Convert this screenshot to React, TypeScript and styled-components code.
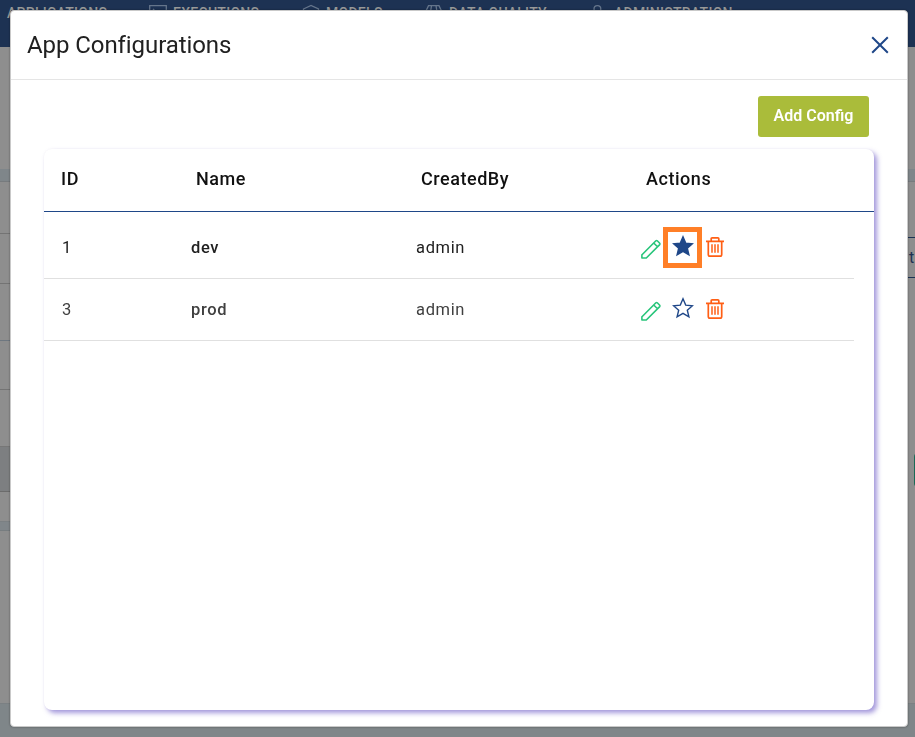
import React from 'react';
import styled, { createGlobalStyle } from 'styled-components';

const GlobalStyle = createGlobalStyle`
  *, *::before, *::after { box-sizing: border-box; }
  body { margin: 0; overflow: hidden; font-family: Roboto, sans-serif; color: #212121; }
`;

const Page = styled.div`
  display: flex;
  flex-direction: column;
  height: 737px;
  background: #8e8e8e;
`;

const NavBar = styled.nav`
  display: flex;
  flex: none;
  height: 47px;
  background: #1d3253;
  color: #989998;
`;

const NavItem = styled.div<{ $width: number; $gap?: number; $indent?: number }>`
  display: flex;
  flex: none;
  align-items: flex-start;
  width: ${(p) => p.$width}px;
  padding: 4px 0 0 ${(p) => p.$indent ?? 0}px;
  gap: ${(p) => p.$gap ?? 6}px;
  font-size: 14px;
  line-height: 18px;
  font-weight: 500;
  letter-spacing: 0.28px;
  white-space: nowrap;
  svg { flex: none; }
`;

const Backdrop = styled.main`
  display: flex;
  flex: none;
  height: 656px;
  justify-content: space-between;
`;

const Footer = styled.footer`
  flex: 1;
  border-top: 1px solid #7b8083;
  background: #7f8689;
`;

const Rail = styled.div`
  width: 100px;
  flex: none;
`;

const Band = styled.div<{ $height: number; $fill?: string; $line?: string }>`
  height: ${(p) => p.$height}px;
  background: ${(p) => p.$fill ?? '#8e8e8e'};
  border-bottom: ${(p) => (p.$line ? `1px solid ${p.$line}` : '0')};
`;

const SelectStub = styled.div`
  height: 41px;
  border: 1px solid #1d3253;
  border-width: 1px 0;
  padding-left: 94px;
  line-height: 39px;
  font-size: 16px;
  color: #1d3253;
`;

const GreenStub = styled.div`
  width: 20px;
  height: 34px;
  margin-left: 99px;
  border-radius: 4px 0 0 4px;
  background: #1a6a56;
`;

const Dialog = styled.section`
  position: fixed;
  top: 10px;
  left: 10px;
  display: flex;
  flex-direction: column;
  width: 898px;
  height: 717px;
  border: 1px solid #c9c9c9;
  border-radius: 4px;
  background: #fff;
  box-shadow: 0 0 2px rgba(0, 0, 0, 0.45);
`;

const DialogHeader = styled.header`
  display: flex;
  align-items: center;
  justify-content: space-between;
  height: 69px;
  padding: 0 18px 0 16px;
  border-bottom: 1px solid #e5e5e5;
`;

const Title = styled.h1`
  margin: 0;
  font-size: 24px;
  line-height: 32px;
  font-weight: 400;
  letter-spacing: -0.08px;
`;

const IconButton = styled.button`
  display: flex;
  padding: 0;
  border: 0;
  background: none;
`;

const DialogBody = styled.div`
  display: flex;
  flex: 1;
  flex-direction: column;
  padding: 16px 33px 16px;
`;

const AddButton = styled.button`
  align-self: flex-end;
  flex: none;
  width: 111px;
  height: 41px;
  margin-right: 5px;
  padding: 0 0 2px;
  border: 0;
  border-radius: 3px;
  background: #aabc3a;
  color: #fff;
  font: 600 16px Roboto, sans-serif;
`;

const Card = styled.div`
  flex: 1;
  width: 830px;
  margin-top: 12px;
  border-radius: 8px;
  background: #fff;
  box-shadow: 3px 3px 5px rgba(88, 66, 190, 0.55), 0 0 2px rgba(0, 0, 0, 0.04);
`;

const HeadRow = styled.div`
  display: grid;
  grid-template-columns: 135px 225px 225px 1fr;
  align-items: center;
  height: 63px;
  padding: 0 0 4px 17px;
  border-bottom: 1px solid #1f4788;
  color: #111;
  font-size: 18px;
  font-weight: 500;
  letter-spacing: 0.54px;
`;

const Row = styled.div<{ $height: number; $top: number; $color: string }>`
  display: grid;
  grid-template-columns: 129px 225px 225px 1fr;
  align-items: start;
  width: 810px;
  height: ${(p) => p.$height}px;
  padding: ${(p) => p.$top}px 0 0 18px;
  border-bottom: 1px solid #e0e0e0;
  color: ${(p) => p.$color};
  font-size: 16.5px;
  line-height: 22px;
  letter-spacing: 0.65px;
`;

const Name = styled.span`
  font-weight: 500;
`;

const Actions = styled.div`
  display: flex;
  align-items: center;
  height: 41px;
  margin-top: -10px;
`;

const StarFrame = styled.div<{ $marked: boolean }>`
  display: flex;
  align-items: center;
  justify-content: center;
  width: 39px;
  height: 41px;
  margin: 0 4px 0 1px;
  padding-bottom: 3px;
  border: 5px solid ${(p) => (p.$marked ? '#ff7f27' : 'transparent')};
`;

const TrashSlot = styled.span`
  display: flex;
  padding-bottom: 2px;
`;

const CloseIcon = () => (
  <svg width="18" height="18" viewBox="0 0 18 18" fill="none" stroke="#1f4788" strokeWidth="2">
    <path d="M1.2 1.2 16.8 16.8M16.8 1.2 1.2 16.8" />
  </svg>
);

const PencilIcon = () => (
  <svg width="21" height="21" viewBox="0 0 21 21" fill="none" stroke="#29c57b" strokeWidth="1.6" strokeLinejoin="round" transform="translate(-.5 2)">
    <path d="M2 15.2 15.4 1.8Q16.1 1.2 16.8 1.8L19.2 4.2Q19.8 4.9 19.2 5.6L5.8 19H1.4V15.8ZM13.2 4 17 7.8" />
  </svg>
);

const StarIcon = ({ filled }: { filled: boolean }) => (
  <svg width="22" height="22" viewBox="0 0 22 22" fill={filled ? '#1f4788' : 'none'} stroke="#1f4788" strokeWidth="1.4">
    <path d="M11 1.8 13.7 8.1 20.5 8.7 15.3 13.2 16.9 19.9 11 16.3 5.1 19.9 6.7 13.2 1.5 8.7 8.3 8.1Z" />
  </svg>
);

const TrashIcon = () => (
  <svg width="18" height="20" viewBox="0 0 18 20" fill="none" stroke="#ff5f15" strokeWidth="1.7">
    <path d="M0 4.4H18M5.2 4V1.8Q5.2.9 6.1.9H11.9Q12.8.9 12.8 1.8V4M2.3 4.4V17.4Q2.3 19.1 4 19.1H14Q15.7 19.1 15.7 17.4V4.4" />
    <path d="M6 7.2V15.8M9 7.2V15.8M12 7.2V15.8" strokeWidth="1.5" />
  </svg>
);

const NavIcon = ({ d, size = 18 }: { d: string; size?: number }) => (
  <svg width={size} height="18" viewBox={`0 0 ${size} 18`} fill="none" stroke="#65758b" strokeWidth="1.3">
    <path d={d} />
  </svg>
);

const configs = [
  { id: 1, name: 'dev', by: 'admin', starred: true, height: 67, top: 25, color: '#212121' },
  { id: 3, name: 'prod', by: 'admin', starred: false, height: 62, top: 20, color: '#404040' },
];

export default function App() {
  return (
    <>
      <GlobalStyle />
      <Page>
        <NavBar>
          <NavItem $width={149} $indent={7}>APPLICATIONS</NavItem>
          <NavItem $width={153}><NavIcon d="M.7 1.7H17.3V16H.7ZM4 5 7 8" />EXECUTIONS</NavItem>
          <NavItem $width={123}><NavIcon d="M1.5 5 9 1.4 16.5 5V13L9 17 1.5 13Z" />MODELS</NavItem>
          <NavItem $width={164}><NavIcon d="M3.5 1.7H14L16.5 7 9 17 1 7ZM6.5 1.7 5.5 8M11 1.7 12 8" />DATA QUALITY</NavItem>
          <NavItem $width={180} $gap={8}><NavIcon size={17} d="M5 5A3.4 3.4 0 0 1 11.8 5 3.4 3.4 0 0 1 5 5M1 16Q8 8 16 16" />ADMINISTRATION</NavItem>
        </NavBar>
        <Backdrop>
          <Rail>
            <Band $height={122} />
            <Band $height={13} $fill="#7f868a" $line="#777b7e" />
            <Band $height={52} $line="#747474" />
            <Band $height={50} $line="#747474" />
            <Band $height={57} $line="#6e7780" />
            <Band $height={49} $line="#747474" />
            <Band $height={57} $line="#777" />
            <Band $height={45} $fill="#7d7f81" $line="#6c6c6c" />
            <Band $height={30} $line="#7b8083" />
            <Band $height={9} $fill="#80868a" $line="#777d80" />
          </Rail>
          <Rail>
            <Band $height={122} />
            <Band $height={13} $fill="#7f868a" $line="#777b7e" />
            <Band $height={55} />
            <SelectStub>t</SelectStub>
            <Band $height={175} />
            <GreenStub />
          </Rail>
        </Backdrop>
        <Footer />
      </Page>
      <Dialog>
        <DialogHeader>
          <Title>App Configurations</Title>
          <IconButton aria-label="Close"><CloseIcon /></IconButton>
        </DialogHeader>
        <DialogBody>
          <AddButton>Add Config</AddButton>
          <Card>
            <HeadRow>
              <span>ID</span>
              <span>Name</span>
              <span>CreatedBy</span>
              <span>Actions</span>
            </HeadRow>
            {configs.map((c) => (
              <Row key={c.id} $height={c.height} $top={c.top} $color={c.color}>
                <span>{c.id}</span>
                <Name>{c.name}</Name>
                <span>{c.by}</span>
                <Actions>
                  <PencilIcon />
                  <StarFrame $marked={c.starred}><StarIcon filled={c.starred} /></StarFrame>
                  <TrashSlot><TrashIcon /></TrashSlot>
                </Actions>
              </Row>
            ))}
          </Card>
        </DialogBody>
      </Dialog>
    </>
  );
}
